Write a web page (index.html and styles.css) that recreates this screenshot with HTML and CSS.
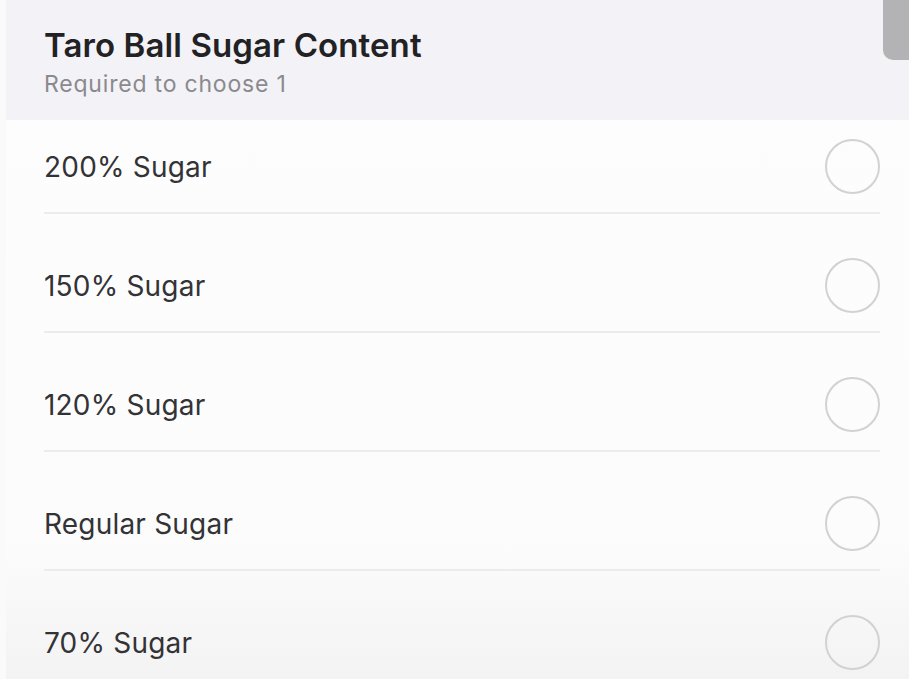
FILE: index.html
```html
<!DOCTYPE html>
<html>
<head>
<meta charset="utf-8">
<link rel="stylesheet" href="styles.css">
</head>
<body>
<div class="page">
  <header class="group-head">
    <h1 class="title">Taro Ball Sugar Content</h1>
    <p class="sub">Required to choose 1</p>
  </header>
  <ul class="options">
    <li class="opt first"><span class="label">200% Sugar</span><span class="radio"></span></li>
    <li class="opt"><span class="label">150% Sugar</span><span class="radio"></span></li>
    <li class="opt"><span class="label">120% Sugar</span><span class="radio"></span></li>
    <li class="opt"><span class="label">Regular Sugar</span><span class="radio"></span></li>
    <li class="opt last"><span class="label">70% Sugar</span><span class="radio"></span></li>
  </ul>
  <div class="scrollbar"></div>
</div>
</body>
</html>
```
FILE: styles.css
```css
html, body { margin: 0; padding: 0; }
body {
  background: #fafafb;
  font-family: "Inter", "Liberation Sans", Arial, sans-serif;
  width: 909px;
  height: 679px;
  overflow: hidden;
}
.page {
  position: relative;
  height: 679px;
  margin-left: 6px;
  background: linear-gradient(#fdfdfe 0, #fcfcfd 540px, #f3f3f4 679px);
}
.group-head {
  background: #f3f2f6;
  height: 120px;
  box-sizing: border-box;
  padding: 25px 0 0 38px;
}
.title {
  margin: 0;
  font-size: 33px;
  font-weight: 600;
  color: #222225;
  line-height: 40px;
  letter-spacing: 0.1px;
}
.sub {
  margin: 5px 0 0;
  font-size: 23px;
  color: #8a8a8e;
  line-height: 28px;
  letter-spacing: 0.8px;
}
.options {
  list-style: none;
  margin: 0;
  padding: 0 29px 0 38px;
}
.opt {
  display: flex;
  align-items: center;
  justify-content: space-between;
  padding: 44px 0 18px;
  border-bottom: 2px solid #ececee;
}
.opt.first { padding-top: 19px; }
.opt.last { border-bottom: none; }
.label {
  font-size: 28px;
  color: #333336;
  letter-spacing: 0.2px;
}
.radio {
  width: 55px;
  height: 55px;
  border: 2px solid #d2d2d4;
  border-radius: 50%;
  box-sizing: border-box;
}
.scrollbar {
  position: absolute;
  right: 0;
  top: 0;
  width: 26px;
  height: 60px;
  background: #b3b3b5;
  border-bottom-left-radius: 10px;
}
```
